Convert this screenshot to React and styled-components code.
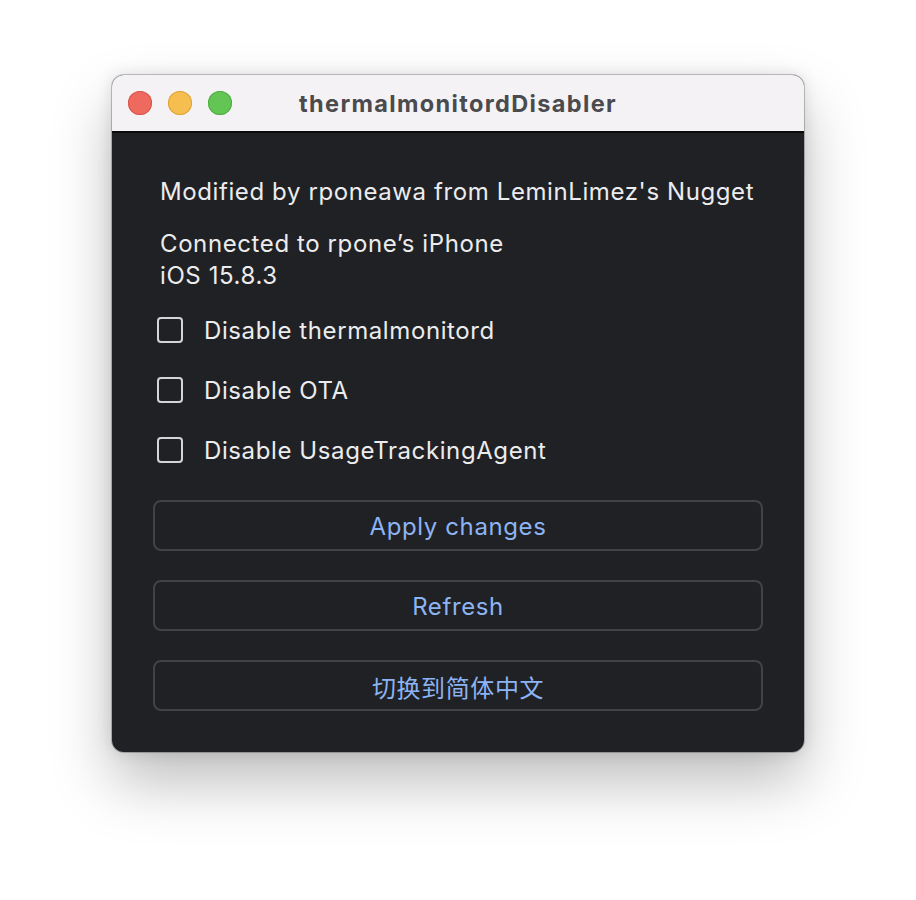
import React from "react";
import styled, { createGlobalStyle } from "styled-components";

const Global = createGlobalStyle`
  html, body { margin: 0; padding: 0; background: #ffffff; }
  body { font-family: Inter, "Noto Sans", sans-serif; }
`;

const Page = styled.div`
  width: 916px;
  height: 900px;
  padding: 75px 0 0 112px;
  box-sizing: border-box;
`;

const Window = styled.div`
  width: 692px;
  height: 677px;
  border-radius: 12px;
  overflow: hidden;
  display: flex;
  flex-direction: column;
  box-shadow: 0 0 0 1px rgba(0,0,0,0.22), 0 30px 60px rgba(0,0,0,0.26), 0 0 16px rgba(0,0,0,0.12);
  background: #202124;
`;

const TitleBar = styled.div`
  height: 56px;
  flex: none;
  background: #f4f2f5;
  border-bottom: 2px solid #0b0b0c;
  position: relative;
  display: flex;
  align-items: center;
  justify-content: center;
`;

const Lights = styled.div`
  position: absolute;
  left: 16px;
  top: 16px;
  display: flex;
  gap: 16px;
`;

const Light = styled.span`
  width: 24px;
  height: 24px;
  border-radius: 50%;
  background: ${p => p.$c};
  box-shadow: inset 0 0 0 1px ${p => p.$b};
`;

const Title = styled.div`
  font-family: Inter, "Noto Sans", sans-serif;
  font-weight: 700;
  font-size: 23.5px;
  color: #4b4a4d;
  letter-spacing: 1.35px;
  margin-top: 1px;
`;

const Content = styled.div`
  flex: 1;
  padding: 43px 41px 0 41px;
  display: flex;
  flex-direction: column;
  color: #ececee;
  font-size: 24px;
  letter-spacing: 0.6px;
`;

const Para = styled.div`
  padding-left: 7px;
  line-height: 32px;
  margin-bottom: ${p => p.$mb || 0}px;
`;

const Checks = styled.div`
  display: flex;
  flex-direction: column;
  margin-top: 8px;
`;

const CheckRow = styled.label`
  height: 60px;
  display: flex;
  align-items: center;
  padding-left: 4px;
  gap: 21px;
`;

const Box = styled.span`
  width: 26px;
  height: 26px;
  box-sizing: border-box;
  border: 2.5px solid #d5d5d7;
  border-radius: 4px;
  flex: none;
`;

const Buttons = styled.div`
  display: flex;
  flex-direction: column;
  gap: 29px;
  margin-top: 20px;
`;

const Button = styled.div`
  height: 51px;
  box-sizing: border-box;
  border: 2px solid #424346;
  border-radius: 8px;
  display: flex;
  align-items: center;
  justify-content: center;
  padding-top: 2px;
  color: #8cb3f3;
  font-size: 24px;
  letter-spacing: 0.6px;
  font-family: Inter, "Noto Sans CJK SC", sans-serif;
`;

export default function App() {
  return (
    <Page>
      <Global />
      <Window>
        <TitleBar>
          <Lights>
            <Light $c="#ee6a5f" $b="#d7564b" />
            <Light $c="#f6be4f" $b="#dca43a" />
            <Light $c="#62c554" $b="#4fae43" />
          </Lights>
          <Title>thermalmonitordDisabler</Title>
        </TitleBar>
        <Content>
          <Para $mb={20}>Modified by rponeawa from LeminLimez's Nugget</Para>
          <Para>Connected to rpone’s iPhone<br />iOS 15.8.3</Para>
          <Checks>
            <CheckRow><Box />Disable thermalmonitord</CheckRow>
            <CheckRow><Box />Disable OTA</CheckRow>
            <CheckRow><Box />Disable UsageTrackingAgent</CheckRow>
          </Checks>
          <Buttons>
            <Button>Apply changes</Button>
            <Button>Refresh</Button>
            <Button>切换到简体中文</Button>
          </Buttons>
        </Content>
      </Window>
    </Page>
  );
}
